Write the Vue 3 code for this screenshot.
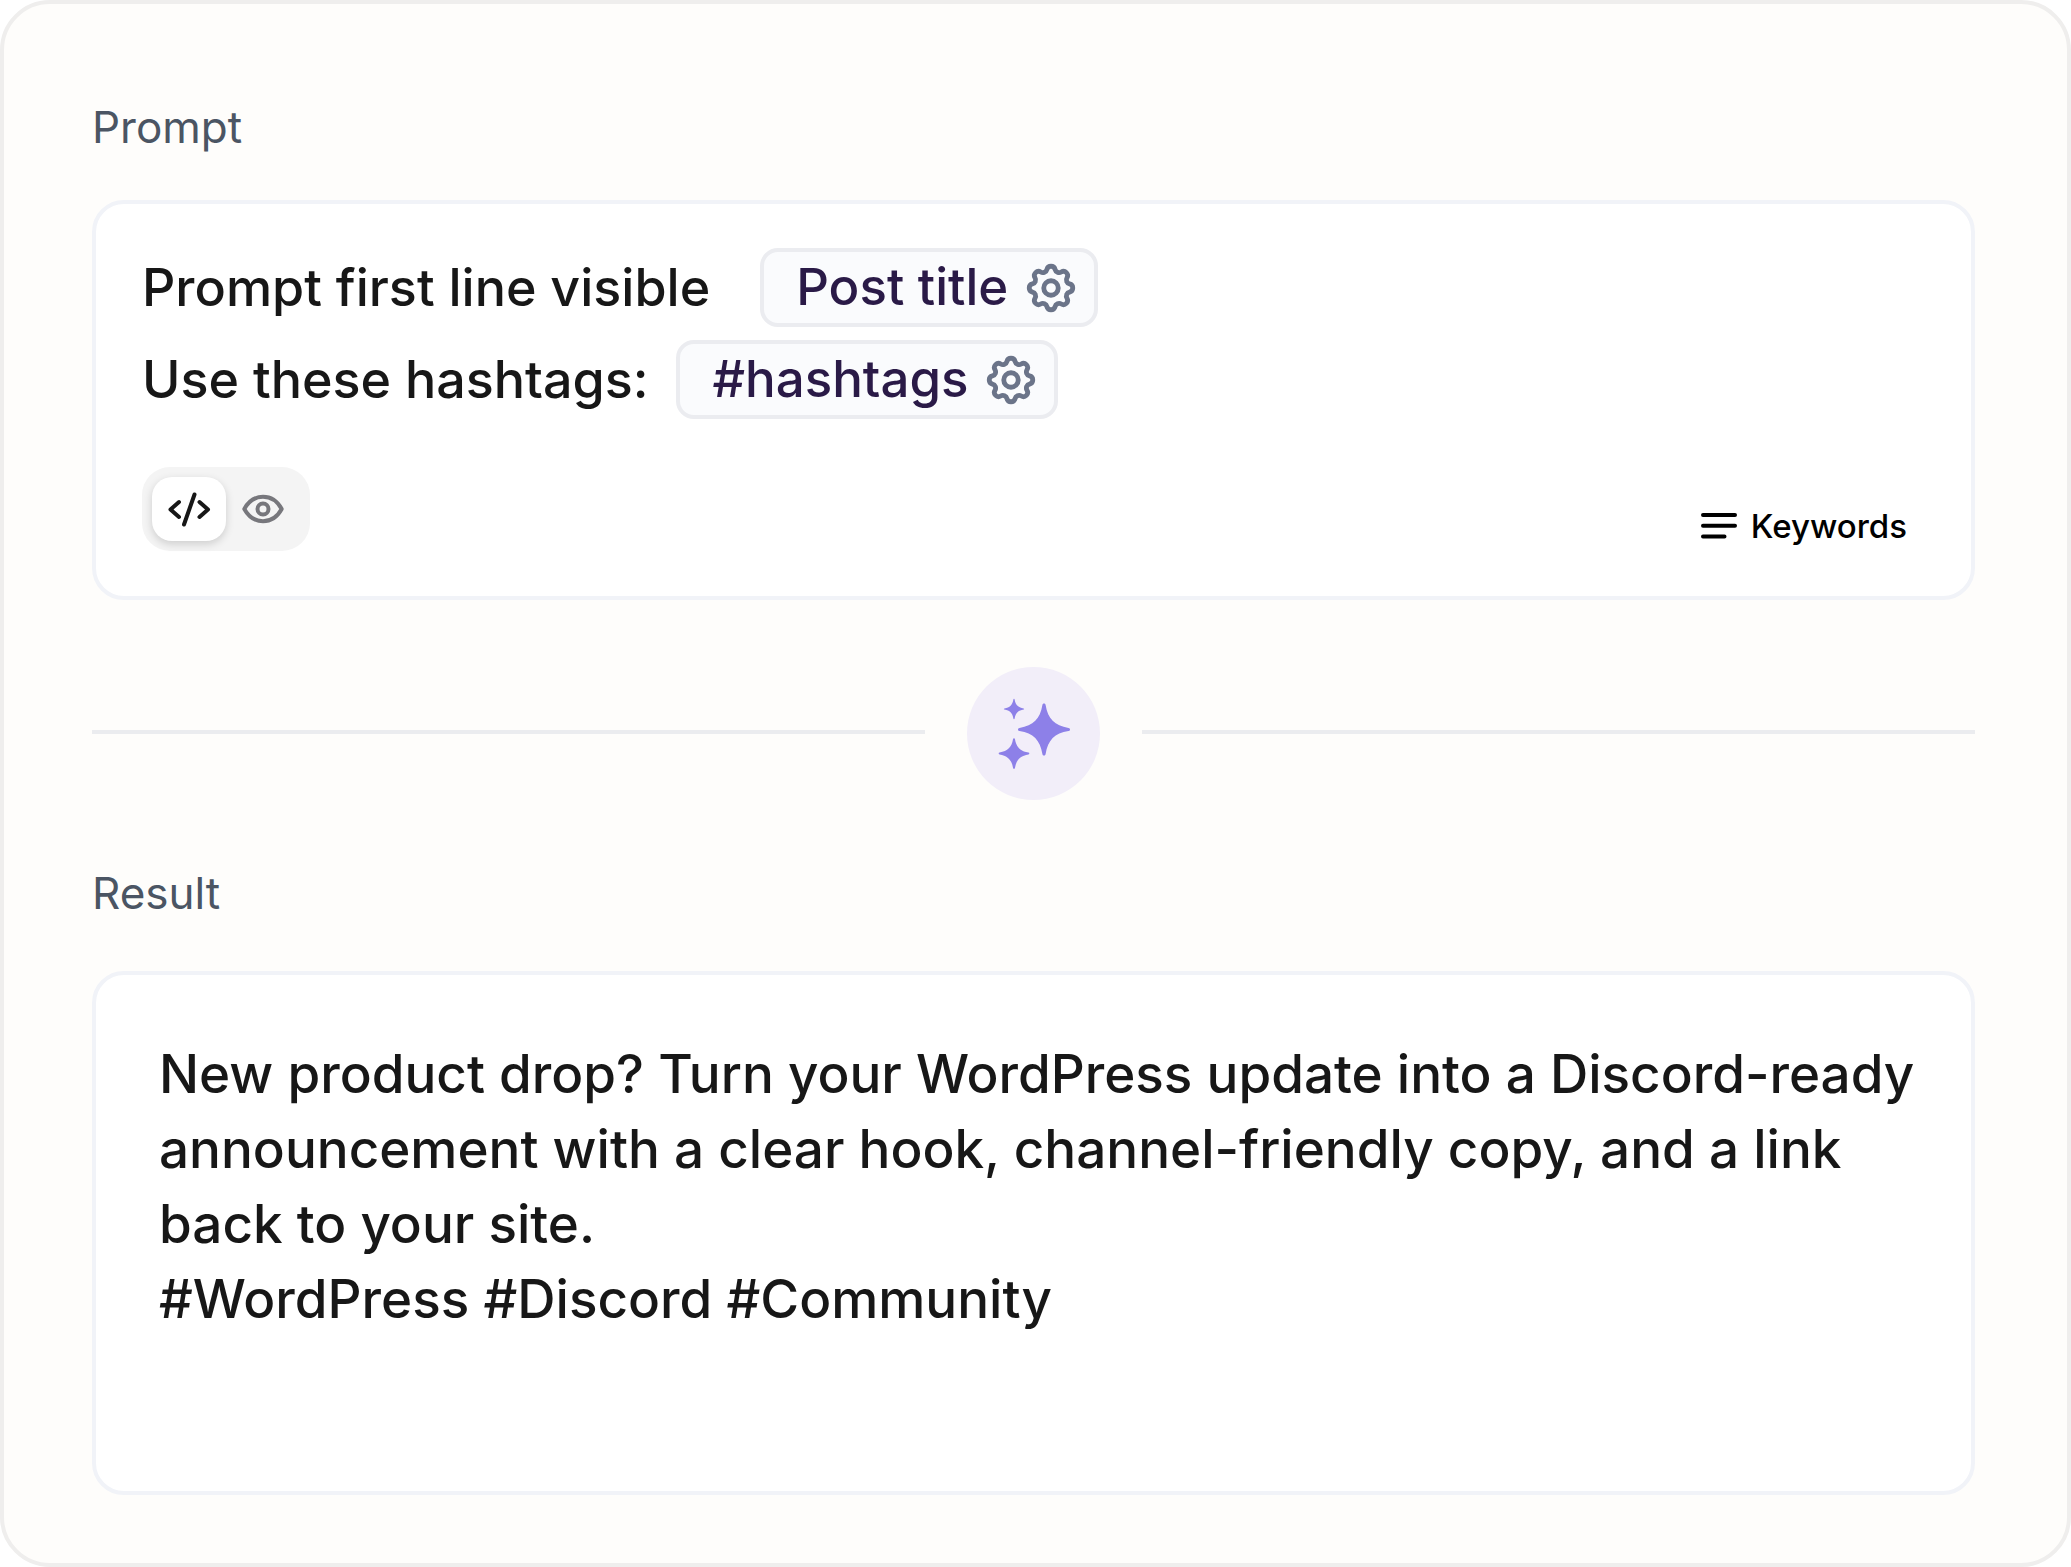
<script setup>
import { ref } from 'vue'

const mode = ref('code')

const promptLines = [
  { text: 'Prompt first line visible', token: 'Post title', wide: true },
  { text: 'Use these hashtags:', token: '#hashtags', wide: false },
]

const resultLines = [
  'New product drop? Turn your WordPress update into a Discord-ready',
  'announcement with a clear hook, channel-friendly copy, and a link',
  'back to your site.',
  '#WordPress #Discord #Community',
]
</script>

<template>
  <main class="card">
    <section>
      <h2 class="label">Prompt</h2>
      <div class="box prompt-box">
        <div v-for="line in promptLines" :key="line.token" class="prompt-line" :class="{ wide: line.wide }">
          <span>{{ line.text }}</span>
          <span class="token">
            <span class="token-text">{{ line.token }}</span>
            <button type="button" class="gear" :aria-label="`${line.token} settings`">
              <svg viewBox="0 0 24 24" aria-hidden="true">
                <path d="M10.325 4.317c.426-1.756 2.924-1.756 3.35 0a1.724 1.724 0 0 0 2.573 1.066c1.543-.94 3.31.826 2.37 2.37a1.724 1.724 0 0 0 1.065 2.572c1.756.426 1.756 2.924 0 3.35a1.724 1.724 0 0 0-1.066 2.573c.94 1.543-.826 3.31-2.37 2.37a1.724 1.724 0 0 0-2.572 1.065c-.426 1.756-2.924 1.756-3.35 0a1.724 1.724 0 0 0-2.573-1.066c-1.543.94-3.31-.826-2.37-2.37a1.724 1.724 0 0 0-1.065-2.572c-1.756-.426-1.756-2.924 0-3.35a1.724 1.724 0 0 0 1.066-2.573c-.94-1.543.826-3.31 2.37-2.37 1 .608 2.296.07 2.572-1.065z" />
                <circle cx="12" cy="12" r="3" />
              </svg>
            </button>
          </span>
        </div>
        <div class="toolbar">
          <div class="toggle" role="group" aria-label="View mode">
            <button type="button" aria-label="Code" :class="{ active: mode === 'code' }" @click="mode = 'code'">
              <svg width="43" height="35" viewBox="0 0 43 35" aria-hidden="true">
                <path d="M11 10 2.500 17.500l8.500 7.500M26.500 2.500 16 32.500M31.500 10l8.500 7.500-8.500 7.500" />
              </svg>
            </button>
            <button type="button" aria-label="Preview" :class="{ active: mode === 'preview' }" @click="mode = 'preview'">
              <svg width="42" height="30" viewBox="0 0 42 30" aria-hidden="true">
                <path d="M2.300 15C7 6.500 13.500 2.800 21 2.800S35 6.500 39.700 15C35 23.500 28.500 27.200 21 27.200S7 23.500 2.300 15z" />
                <circle cx="21" cy="15" r="5.500" />
              </svg>
            </button>
          </div>
          <button type="button" class="keywords">
            <svg width="36" height="26" viewBox="0 0 36 26" aria-hidden="true">
              <path d="M2 2h32M2 12.700h32M2 23.400h21.500" />
            </svg>
            Keywords
          </button>
        </div>
      </div>
    </section>

    <div class="divider">
      <span class="rule"></span>
      <button type="button" class="spark" aria-label="Generate">
        <svg width="72" height="72" viewBox="0 0 72 72" aria-hidden="true">
          <defs>
            <path id="star" d="M0-26c.9 0 1.400.5 1.600 1.500C4-10.500 10.500-4 24.500-1.600c1 .2 1.500.7 1.500 1.600s-.5 1.400-1.500 1.600C10.500 4 4 10.500 1.600 24.500 1.400 25.500.9 26 0 26s-1.400-.5-1.600-1.500C-4 10.500-10.500 4-24.500 1.600-25.500 1.400-26 .9-26 0s.5-1.400 1.500-1.600C-10.500-4-4-10.500-1.600-24.500-1.400-25.500-.9-26 0-26z" />
          </defs>
          <use href="#star" transform="translate(46 31.500)" />
          <use href="#star" transform="translate(16 11) scale(.39)" />
          <use href="#star" transform="translate(16 55.500) scale(.59)" />
        </svg>
      </button>
      <span class="rule"></span>
    </div>

    <section>
      <h2 class="label result-label">Result</h2>
      <div class="box result-box">
        <p v-for="line in resultLines" :key="line">{{ line }}</p>
      </div>
    </section>
  </main>
</template>

<style>
body {
  margin: 0;
  background: #fff;
}
</style>

<style scoped>
.card {
  box-sizing: border-box;
  min-height: 100vh;
  padding: 92px 92px 68px 88px;
  border: 4px solid #efeeed;
  border-radius: 50px;
  background: #fefdfb;
  color: #171717;
  font-family: Inter, sans-serif;
  font-size: 52px;
  font-weight: 500;
}

button {
  display: flex;
  align-items: center;
  justify-content: center;
  margin: 0;
  padding: 0;
  border: 0;
  background: none;
  color: inherit;
  font: inherit;
  cursor: pointer;
}

svg {
  display: block;
  flex: none;
  fill: none;
  stroke: currentColor;
  stroke-linecap: round;
  stroke-linejoin: round;
}

.label {
  margin: 0 0 42px;
  color: #4b5563;
  font-size: 44px;
  font-weight: 400;
  line-height: 62px;
}

.result-label {
  margin-bottom: 47px;
}

.box {
  box-sizing: border-box;
  border: 4px solid #f1f3f8;
  border-radius: 32px;
  background: #fff;
}

.prompt-box {
  padding: 44px 64px 45px 46px;
}

.prompt-line {
  display: flex;
  align-items: center;
  gap: 28px;
  margin-bottom: 13px;
}

.prompt-line.wide {
  gap: 50px;
}

.token {
  box-sizing: border-box;
  display: flex;
  align-items: center;
  gap: 14px;
  height: 79px;
  padding: 0 14px 0 32px;
  border: 4px solid #ebecf0;
  border-radius: 18px;
  background: #fafbfd;
  color: #2a1a47;
  font-size: 51px;
}

.token-text {
  padding-bottom: 3px;
}

.gear svg {
  width: 58px;
  height: 58px;
  color: #6b7489;
  stroke-width: 2;
}

.toolbar {
  display: flex;
  align-items: flex-end;
  justify-content: space-between;
  margin-top: 48px;
}

.toggle {
  display: flex;
  padding: 10px;
  border-radius: 28px;
  background: #f4f4f4;
}

.toggle button {
  width: 74px;
  height: 64px;
  border-radius: 20px;
  color: #77777c;
  stroke-width: 4;
}

.toggle button.active {
  background: #fff;
  box-shadow: 0 3px 8px rgb(0 0 0 / 16%);
  color: #171717;
}

.keywords {
  gap: 14px;
  height: 50px;
  color: #000;
  font-size: 33px;
  stroke-width: 4;
}

.divider {
  display: flex;
  align-items: center;
  gap: 42px;
  margin: 67px 0 62px;
}

.rule {
  flex: 1;
  height: 4px;
  margin-bottom: 4px;
  background: #ebecef;
}

.spark {
  width: 133px;
  height: 133px;
  border-radius: 50%;
  background: #f2eef9;
  color: #8d80e8;
}

.spark svg {
  fill: currentColor;
  stroke: none;
}

.result-box {
  min-height: 524px;
  padding: 62px 40px 62px 63px;
  font-size: 53px;
}

.result-box p {
  margin: 0;
  line-height: 75px;
}
</style>
